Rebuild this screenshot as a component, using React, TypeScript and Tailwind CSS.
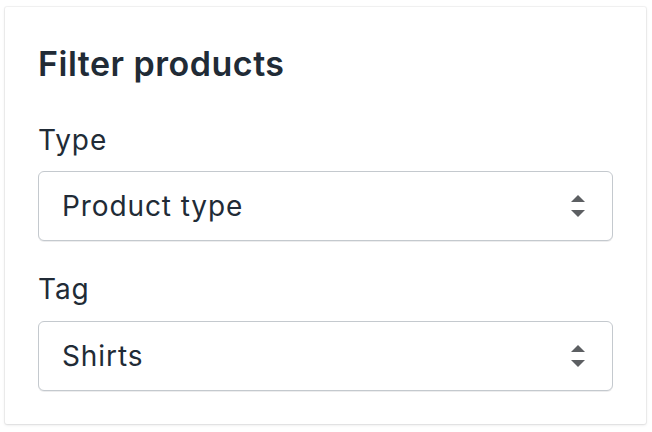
import React from "react";

function Arrows() {
  return (
    <svg width="14" height="22" viewBox="0 0 14 22" className="shrink-0">
      <path d="M7 0 L14 7 L0 7 Z" fill="#5c5f62" />
      <path d="M0 15 L14 15 L7 22 Z" fill="#5c5f62" />
    </svg>
  );
}

function Select({ value }: { value: string }) {
  return (
    <div className="flex h-[70px] items-center justify-between rounded-[6px] border border-[#c4c9ce] bg-white pl-[23px] pr-[27px] shadow-[0_1px_0_0_rgba(22,29,37,0.08)]">
      <span className="text-[28px] leading-[32px] tracking-[0.9px] text-[#212b36]">{value}</span>
      <Arrows />
    </div>
  );
}

export default function App() {
  return (
    <div className="h-[432px] w-[652px] bg-white pl-[5px] pt-[7px] font-['Inter',sans-serif]">
      <div className="h-[417px] w-[641px] rounded-[2px] bg-white px-[33px] pt-[37px] shadow-[0_0_0_1px_rgba(63,63,68,0.06),0_1px_3px_0_rgba(63,63,68,0.15)]">
        <h2 className="text-[34px] font-semibold leading-[40px] tracking-[0.5px] text-[#212b36]">Filter products</h2>
        <div className="mt-[40px] text-[28px] leading-[32px] tracking-[0.9px] text-[#212b36]">Type</div>
        <div className="mt-[15px]">
          <Select value="Product type" />
        </div>
        <div className="mt-[32px] text-[28px] leading-[32px] tracking-[0.9px] text-[#212b36]">Tag</div>
        <div className="mt-[16px]">
          <Select value="Shirts" />
        </div>
      </div>
    </div>
  );
}
